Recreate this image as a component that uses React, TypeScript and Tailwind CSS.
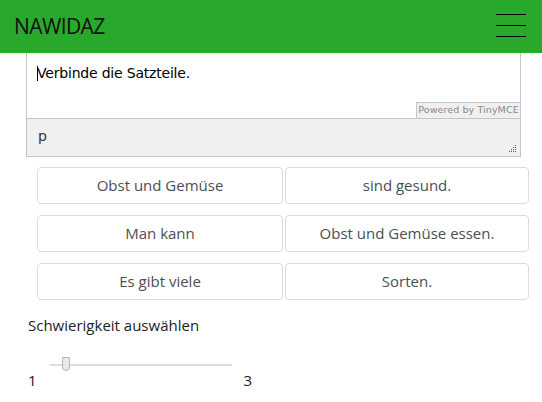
import React from "react";

const rows: [string, string][] = [
  ["Obst und Gemüse", "sind gesund."],
  ["Man kann", "Obst und Gemüse essen."],
  ["Es gibt viele", "Sorten."],
];

export default function App() {
  return (
    <div className="w-[542px] h-[402px] overflow-hidden bg-white text-[#212529]" style={{ fontFamily: '"Open Sans", sans-serif' }}>
      <header className="h-[53px] bg-[#28a92b] flex items-center justify-between pl-[14px] pr-[16px]">
        <span className="text-[21px] text-[#111] tracking-[-0.6px] mt-[1px]">NAWIDAZ</span>
        <div className="flex flex-col gap-[10px] w-[30px] mt-[-2px]">
          <span className="block h-px bg-black" />
          <span className="block h-px bg-black" />
          <span className="block h-px bg-black" />
        </div>
      </header>

      <div className="ml-[26px] w-[495px] border-x border-b border-[#c5c5c5]">
        <div className="relative h-[65px] bg-white">
          <div className="absolute left-[10px] top-[13px] w-px h-[15px] bg-black" />
          <p className="pt-[10px] pl-[10px] text-[14px] tracking-[-0.2px] text-black" style={{ fontFamily: '"DejaVu Sans", Verdana, sans-serif' }}>
            Verbinde die Satzteile.
          </p>
          <div className="absolute right-0 bottom-0 h-[16px] w-[104px] border-l border-t border-[#c5c5c5] bg-[#f0f0f0] flex items-center justify-center whitespace-nowrap text-[9.5px] tracking-[0.1px] text-[#888]" style={{ fontFamily: '"DejaVu Sans", sans-serif' }}>
            Powered by TinyMCE
          </div>
        </div>
        <div className="relative h-[38px] bg-[#f0f0f0] border-t border-[#c5c5c5]">
          <span className="absolute left-[11px] top-[7px] text-[14px] text-[#333]" style={{ fontFamily: '"DejaVu Sans", Verdana, sans-serif' }}>p</span>
          <svg className="absolute right-[3px] bottom-[3px]" width="8" height="8" viewBox="0 0 8 8">
            {[[7,1],[5,3],[7,3],[3,5],[5,5],[7,5],[1,7],[3,7],[5,7],[7,7]].map(([x, y], i) => (
              <rect key={i} x={x - 1} y={y - 1} width="1" height="1" fill="#555" />
            ))}
          </svg>
        </div>
      </div>

      <div className="ml-[37px] w-[492px] mt-[10px] flex flex-col gap-[11px]">
        {rows.map(([a, b], i) => (
          <div key={i} className="grid grid-cols-[246px_244px] gap-[2px]">
            {[a, b].map((t) => (
              <button key={t} className="h-[37px] rounded-[4px] border border-[#dcdcdc] bg-white text-[15px] text-[#4a4f55] flex items-center justify-center">
                {t}
              </button>
            ))}
          </div>
        ))}
      </div>

      <div className="pl-[28px] mt-[14px]">
        <div className="text-[15px] text-[#222]">Schwierigkeit auswählen</div>
        <div className="relative h-[30px] mt-[14px]">
          <div className="absolute left-[22px] top-[13px] w-[182px] h-[2px] bg-[#dcdcdc]" />
          <div className="absolute left-[34px] top-[6px] w-[8px] h-[14px] bg-[#e8e8e8] border border-[#b5b5b5] rounded-b-[4px] rounded-t-[1px]" />
        </div>
        <div className="flex w-[224px] justify-between text-[15px] text-[#222] -mt-[12px]">
          <span>1</span>
          <span>3</span>
        </div>
      </div>
    </div>
  );
}
